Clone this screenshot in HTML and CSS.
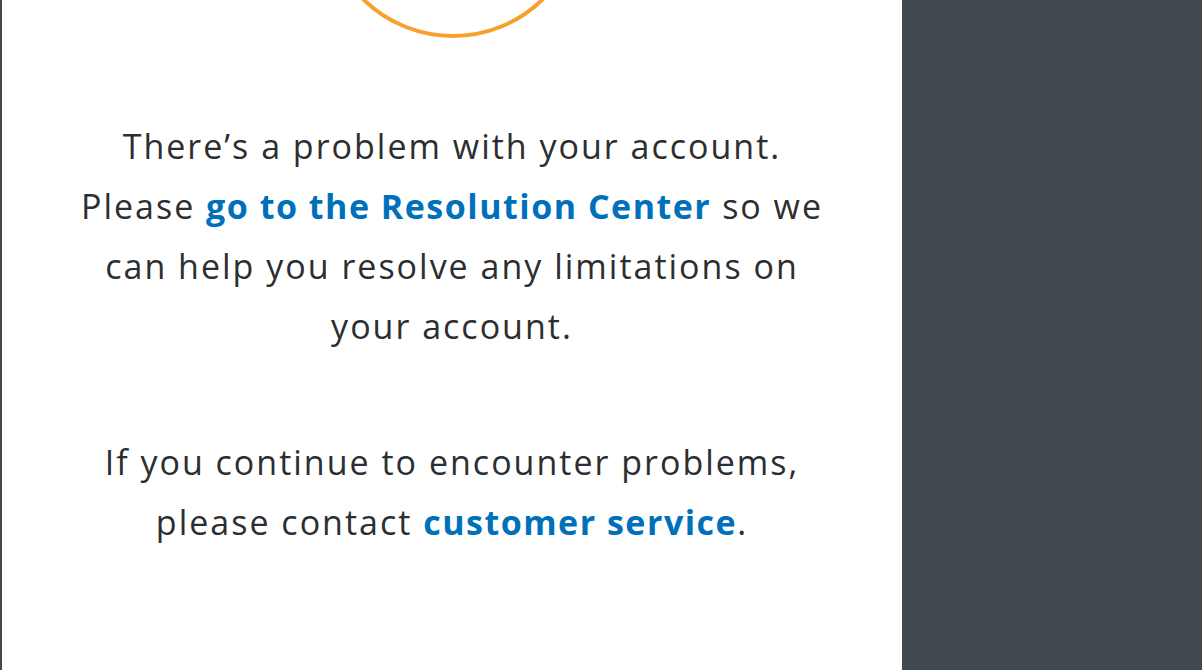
FILE: index.html
```html
<!DOCTYPE html>
<html lang="en">
<head>
<meta charset="utf-8">
<title>Account problem</title>
<link rel="stylesheet" href="styles.css">
</head>
<body>
<div class="layout">
  <main class="panel">
    <div class="ring"></div>
    <p class="message">There’s a problem with your account.<br>Please <a href="#" class="link">go to the Resolution Center</a> so we<br>can help you resolve any limitations on<br>your account.</p>
    <p class="message">If you continue to encounter problems,<br>please contact <a href="#" class="link">customer service</a>.</p>
  </main>
  <aside class="side"></aside>
</div>
</body>
</html>
```
FILE: styles.css
```css
html, body {
  margin: 0;
  padding: 0;
  height: 100%;
  overflow: hidden;
}
body {
  background: #414850;
  font-family: "Open Sans", "Lato", sans-serif;
}
.layout {
  display: flex;
  height: 670px;
  border-left: 2px solid #414850;
}
.panel {
  width: 900px;
  background: #ffffff;
  display: flex;
  flex-direction: column;
  align-items: center;
}
.ring {
  width: 260px;
  height: 260px;
  box-sizing: border-box;
  border: 4px solid #f7a02c;
  border-radius: 50%;
  margin-top: -222px;
  margin-left: 2px;
  flex: none;
}
.message {
  margin: 0;
  font-size: 34px;
  line-height: 60px;
  letter-spacing: 2px;
  color: #2c2e2f;
  text-align: center;
  font-variant-ligatures: none;
}
.message:first-of-type {
  margin-top: 78px;
}
.message + .message {
  margin-top: 76px;
}
.link {
  color: #0070ba;
  font-weight: 700;
  letter-spacing: 1.5px;
  text-decoration: none;
}
.side {
  flex: 1;
  background: #414850;
}
```
